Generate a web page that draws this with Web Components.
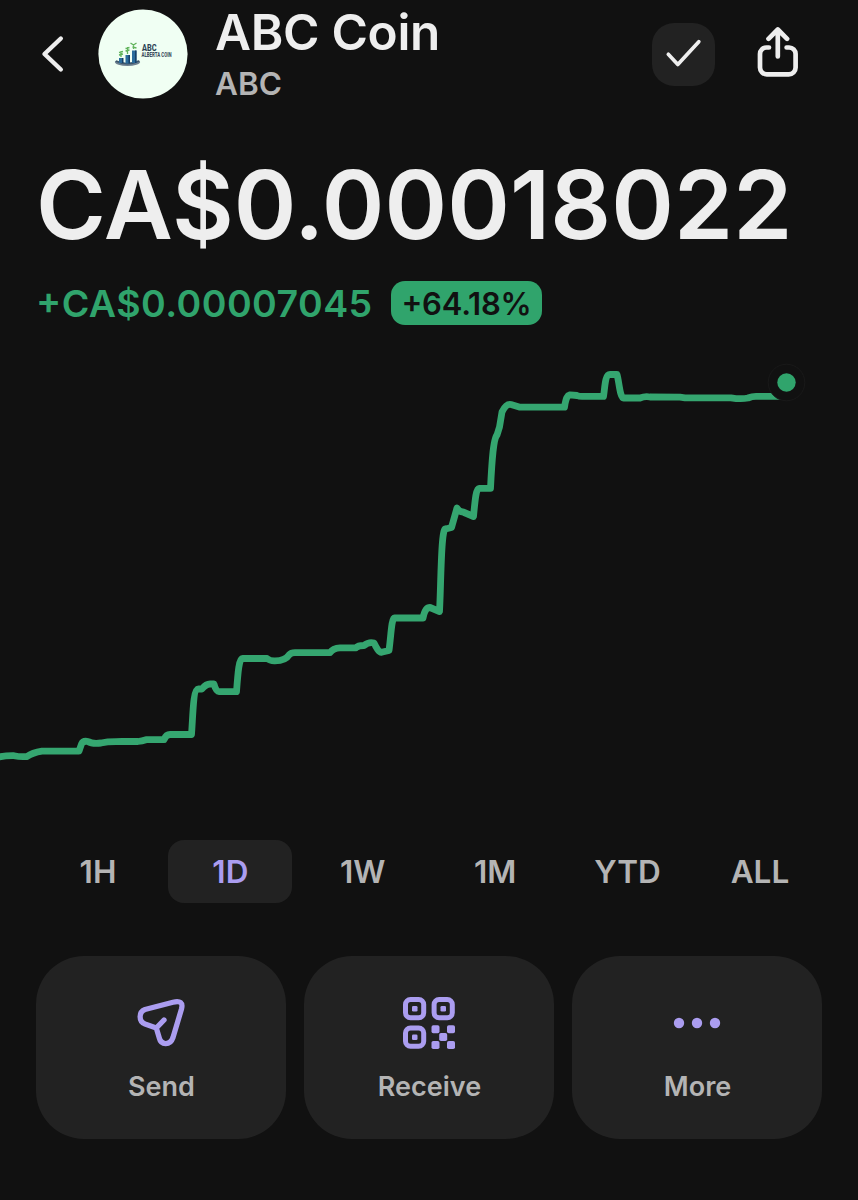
<!DOCTYPE html>
<html lang="en">
<head>
<meta charset="utf-8">
<title>ABC Coin</title>
<style>
  html, body { margin: 0; background: #111111; }
  body { font-family: Inter, "Liberation Sans", sans-serif; color: #eeeeee; }
</style>
</head>
<body>
<coin-page></coin-page>
<script>
const define = (name, html) => customElements.define(name, class extends HTMLElement {
  constructor() {
    super();
    const t = document.createElement('template');
    t.innerHTML = html;
    this.attachShadow({ mode: 'open' }).append(t.content.cloneNode(true));
  }
});

define('coin-logo', `
<style>:host{display:block;width:90px;height:90px} svg{display:block}</style>
<svg width="90" height="90" viewBox="98 9 90 90">
  <circle cx="143" cy="54" r="44.6" fill="#f0fff3"/>
  <ellipse cx="127.5" cy="62" rx="12.6" ry="4" fill="#6c7f8f"/>
  <path d="M115 60.5q12 5 25-.5l-1-2h-23z" fill="#f0fff3"/>
  <path d="M116 61q11 5.500 23 0" stroke="#3d566b" stroke-width="1.500" fill="none"/>
  <g fill="#2a6c9c"><path d="M119 58h4v5h-4zM125.500 55h4.500v8.500h-4.500zM132 50.500h4.500V63H132z"/></g>
  <g fill="#173f66"><path d="M122 58h1.500v5H122zM128.500 55h1.500v8.500h-1.500zM135 50.500h1.500V63H135z"/></g>
  <path d="M121 57v-6m-2 1.500l4-1m-4 3.500l4-1M127.500 54v-7m-2 1.500l4-1m-4 3.500l4-1M133.500 49v-5m-3-1l3 2 3-2m-4 4l4 1" stroke="#62b45c" stroke-width="1.300" fill="none"/>
  <text x="142" y="50.800" font-family="Roboto,sans-serif" font-size="9.500" font-weight="800" fill="#2b3f54" textLength="14.500" lengthAdjust="spacingAndGlyphs">ABC</text>
  <text x="141.500" y="56.600" font-family="Roboto,sans-serif" font-size="6.300" font-weight="800" fill="#3c4d5e" textLength="30" lengthAdjust="spacingAndGlyphs">ALBERTA COIN</text>
</svg>`);

define('coin-header', `
<style>
:host{display:flex;height:108px;box-sizing:border-box;padding:0 59px 0 40px;align-items:center}
svg{display:block}
.back{width:26px;margin-right:32px}
.names{flex:1;margin-left:27px;align-self:flex-start;padding-top:4px}
.title{font-size:49.500px;font-weight:600;line-height:56px;letter-spacing:-.3px}
.sub{font-size:31.500px;font-weight:600;line-height:48px;color:#b4b4b4}
.check{width:63px;height:63px;border-radius:22px;background:#222;margin-right:42px}
</style>
<svg class="back" width="26" height="40" viewBox="40 34 26 40"><path d="M60.800 38.500L44.500 54l16.300 15.500" fill="none" stroke="#eee" stroke-width="4.400" stroke-linecap="round" stroke-linejoin="round"/></svg>
<coin-logo></coin-logo>
<div class="names"><div class="title"><slot name="title"></slot></div><div class="sub"><slot name="sub"></slot></div></div>
<div class="check"><svg width="63" height="63" viewBox="652 23 63 63"><path d="M668.300 54.300l9.500 10.200 21-22.800" fill="none" stroke="#eee" stroke-width="3.700" stroke-linecap="round" stroke-linejoin="round"/></svg></div>
<svg width="42" height="54" viewBox="757 27 42 54"><g fill="none" stroke="#eee" stroke-width="4.700" stroke-linecap="round" stroke-linejoin="round"><path d="M777.800 56.500V30M768.500 38.800l9.300-9.300 9.300 9.300M769 47.500h-2.500a6.500 6.500 0 0 0-6.500 6.500v13.500a6.800 6.800 0 0 0 6.800 6.800h22a6.800 6.800 0 0 0 6.800-6.800V54a6.500 6.500 0 0 0-6.500-6.500h-2.500"/></g></svg>`);

define('coin-price', `
<style>
:host{display:block;padding:0 36px;height:242px;box-sizing:border-box;white-space:nowrap}
.price{margin-top:46px;font-size:95px;font-weight:600;line-height:101px;letter-spacing:.1px}
.row{display:flex;align-items:center;margin-top:26px;height:44px;color:#30a46c;font-feature-settings:"case"}
.change{font-size:37.500px;font-weight:600;letter-spacing:.45px;width:355px}
.badge{width:151px;height:44px;border-radius:14px;background:#30a46c;color:#111;font-size:31px;font-weight:600;letter-spacing:-.2px;line-height:45px;text-align:center}
</style>
<div class="price"><slot name="price"></slot></div>
<div class="row"><span class="change"><slot name="change"></slot></span><span class="badge"><slot name="percent"></slot></span></div>`);

define('coin-chart', `
<style>:host{display:block;height:490px} svg{display:block}</style>
<svg width="858" height="490" viewBox="0 350 858 490">
<path fill="none" stroke="#35a670" stroke-width="6.800" stroke-linecap="round" stroke-linejoin="round" d="M-3 757.500Q5 755.500 14 755.700Q20 757 27 756.500C32 753 37 752 42 751.200H79L81.500 744Q83 740.500 88 741.500Q92 744 101 743C110 741 116 742 122 741.500H138Q142 741 146 739.700H164Q166 734.500 170 734.500H191.500C193 715 193 689 198.500 689H202Q206 684 210 684H214Q216 691.700 219 691.700H236.500C238 672 239 658.500 242.500 658.500H267Q270 661 275 660.800C281 660.800 286 660 289 655Q291 652.700 295 652.700H330Q333 648 340 647.800H356Q358 645.500 364 645.500Q369 641.500 374 643C376 647 379 652.800 381.500 652.300L389 650.500C391 636 391.500 618 394.500 618H423Q425 607.500 430 607.500L439.500 611.500C441 585 441 528 445.500 529L451.500 527.500L457 508Q459 512 463 512L473.500 516.500C475 501 476 488.300 479 488.300H490.500C491.500 468 493 439 497 435L499.500 427L502 412Q506 403.500 511 404.500L520 407.200H564.500C566 397 567.500 395.500 570 394.800L577 395.500Q579 396.400 582 396.400H603.500C605 387 605 374.500 610 374.500H617C619 381 620 398 623.500 398H640Q645 396 650 397L680 397.200 685 397.800H731Q741 399.500 748 398Q752 396.300 756 396.300H782"/>
<circle cx="786.500" cy="382.500" r="18.300" fill="#111" stroke="#191919" stroke-width="1"/>
<circle cx="786.500" cy="382.500" r="9.200" fill="#30a46c"/>
</svg>`);

define('range-tab', `
<style>
:host{display:block;height:63px;line-height:64px;border-radius:16px;text-align:center;font-size:31.500px;font-weight:600;color:#b4b4b4}
:host([active]){background:#222;color:#ab9df0}
</style><slot></slot>`);

define('range-tabs', `
<style>:host{display:grid;grid-template-columns:repeat(6,124px);justify-content:space-between;padding:0 36px}</style><slot></slot>`);

define('action-card', `
<style>
:host{display:flex;flex-direction:column;align-items:center;box-sizing:border-box;height:183px;padding-top:37px;border-radius:48px;background:#222;color:#b4b4b4;font-size:27px;font-weight:600;line-height:34px}
.icon{height:60px;margin-bottom:17px;display:flex}
.label{padding-left:1px}
</style><div class="icon"><slot name="icon"></slot></div><div class="label"><slot></slot></div>`);

define('action-cards', `
<style>:host{display:grid;grid-template-columns:repeat(3,250px);gap:18px;padding:53px 36px 0}</style><slot></slot>`);

define('coin-page', `
<style>:host{display:flex;flex-direction:column;width:858px;height:1200px;overflow:hidden;background:#111}svg{display:block}</style>
<coin-header><span slot="title">ABC Coin</span><span slot="sub">ABC</span></coin-header>
<coin-price><span slot="price">CA$0.00018022</span><span slot="change">+CA$0.00007045</span><span slot="percent">+64.18%</span></coin-price>
<coin-chart></coin-chart>
<range-tabs><range-tab>1H</range-tab><range-tab active>1D</range-tab><range-tab>1W</range-tab><range-tab>1M</range-tab><range-tab>YTD</range-tab><range-tab>ALL</range-tab></range-tabs>
<action-cards>
  <action-card><svg slot="icon" width="60" height="60" viewBox="131 993 60 60"><path d="M145 1009.500L173 1002.200Q184 999.500 181.500 1009L173 1037.500C170 1046 161 1045 159.300 1038L156.300 1028 145 1024C138.500 1021.500 138.500 1012 145 1009.500ZM156.300 1028L164 1020" fill="none" stroke="#ab9df0" stroke-width="5.300" stroke-linecap="round" stroke-linejoin="round"/></svg>Send</action-card>
  <action-card><svg slot="icon" width="60" height="60" viewBox="399 993 60 60"><g fill="none" stroke="#ab9df0" stroke-width="5"><rect x="405.500" y="999.500" width="18.200" height="18.200" rx="5"/><rect x="434.100" y="999.500" width="18.200" height="18.200" rx="5"/><rect x="405.500" y="1028.100" width="18.200" height="18.200" rx="5"/></g><g fill="#ab9df0"><rect x="412" y="1006" width="5.500" height="5.500" rx="1.300"/><rect x="440.500" y="1006" width="5.500" height="5.500" rx="1.300"/><rect x="412" y="1034.500" width="5.500" height="5.500" rx="1.300"/><rect x="431.500" y="1025.300" width="8" height="8" rx="1.800"/><rect x="447" y="1025.300" width="8" height="8" rx="1.800"/><rect x="439.200" y="1033" width="8" height="8" rx="1.800"/><rect x="431.500" y="1041" width="8" height="8" rx="1.800"/><rect x="447" y="1041" width="8" height="8" rx="1.800"/></g></svg>Receive</action-card>
  <action-card><svg slot="icon" width="60" height="60" viewBox="667 993 60 60"><g fill="#ab9df0"><circle cx="679" cy="1023" r="5.200"/><circle cx="697" cy="1023" r="5.200"/><circle cx="715" cy="1023" r="5.200"/></g></svg>More</action-card>
</action-cards>`);
</script>
</body>
</html>
